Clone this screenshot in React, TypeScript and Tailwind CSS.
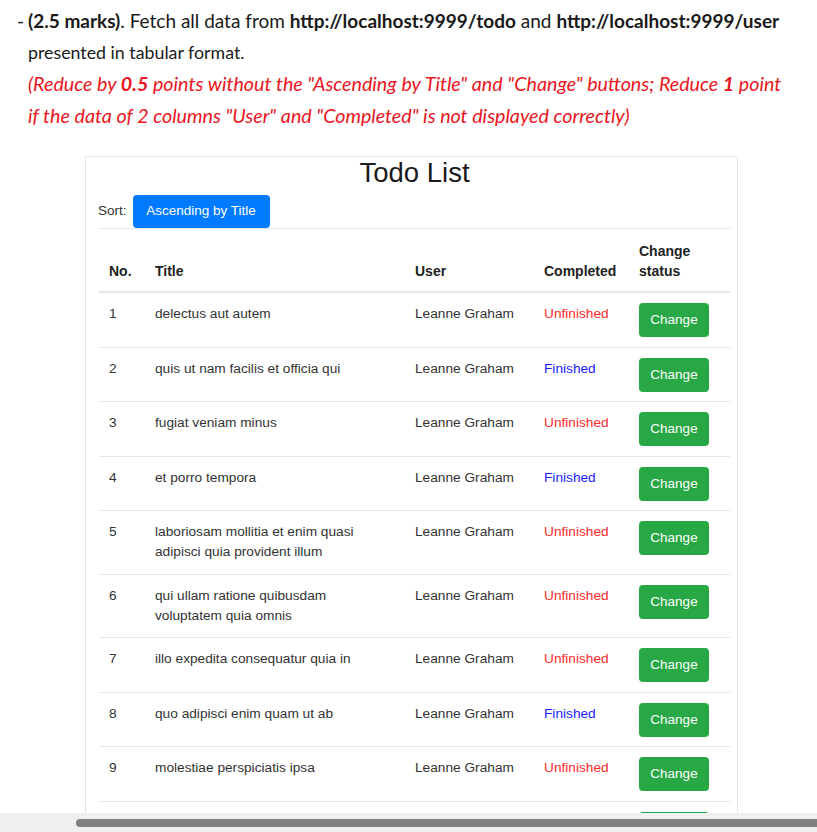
import React from 'react';

interface Todo {
  id: number;
  title: string;
  user: string;
  completed: boolean;
}

const todos: Todo[] = [
  { id: 1, title: 'delectus aut autem', user: 'Leanne Graham', completed: false },
  { id: 2, title: 'quis ut nam facilis et officia qui', user: 'Leanne Graham', completed: true },
  { id: 3, title: 'fugiat veniam minus', user: 'Leanne Graham', completed: false },
  { id: 4, title: 'et porro tempora', user: 'Leanne Graham', completed: true },
  { id: 5, title: 'laboriosam mollitia et enim quasi\nadipisci quia provident illum', user: 'Leanne Graham', completed: false },
  { id: 6, title: 'qui ullam ratione quibusdam\nvoluptatem quia omnis', user: 'Leanne Graham', completed: false },
  { id: 7, title: 'illo expedita consequatur quia in', user: 'Leanne Graham', completed: false },
  { id: 8, title: 'quo adipisci enim quam ut ab', user: 'Leanne Graham', completed: true },
  { id: 9, title: 'molestiae perspiciatis ipsa', user: 'Leanne Graham', completed: false }
];

function TodoTable() {
  return (
    <div className="ml-[85px] w-[653px] border border-[#e6e6e6] bg-white pb-4 font-['Liberation_Sans',Arial,sans-serif] text-[#333]">
      <h1 className="mt-[1px] pl-[6px] text-center text-[27.5px] leading-[30px] text-[#1a1a1a]">Todo List</h1>

      {/* sort bar */}
      <div className="mt-[7px] flex items-center pl-[12px] text-[13.5px]">
        <span className="mr-[6px] text-[#333]">Sort:</span>
        <button className="h-[33px] w-[137px] rounded-[4px] bg-[#007bff] text-[13.5px] text-white">
          Ascending by Title
        </button>
      </div>

      <table className="ml-[13px] w-[631px] table-fixed border-collapse text-left text-[13.7px] leading-[20px]">
        <colgroup>
          <col className="w-[46px]" />
          <col className="w-[260px]" />
          <col className="w-[129px]" />
          <col className="w-[95px]" />
          <col className="w-[101px]" />
        </colgroup>
        <thead>
          <tr className="border-t border-b-2 border-t-[#e3e6ea] border-b-[#e3e6ea] text-[14px] text-[#222]">
            <th className="px-[10px] pt-[12px] pb-[10px] align-bottom font-bold">No.</th>
            <th className="px-[10px] pt-[12px] pb-[10px] align-bottom font-bold">Title</th>
            <th className="px-[10px] pt-[12px] pb-[10px] align-bottom font-bold">User</th>
            <th className="px-[10px] pt-[12px] pb-[10px] align-bottom font-bold">Completed</th>
            <th className="px-[10px] pt-[12px] pb-[10px] align-bottom font-bold">
              Change
              <br />
              status
            </th>
          </tr>
        </thead>
        <tbody>
          {todos.map((todo) => (
            <tr key={todo.id} className="border-t border-[#e3e6ea]">
              <td className="px-[10px] pt-[11px] pb-[11.5px] align-top">{todo.id}</td>
              <td className="px-[10px] pt-[11px] pb-[11.5px] align-top whitespace-pre-line">{todo.title}</td>
              <td className="px-[10px] pt-[11px] pb-[11.5px] align-top">{todo.user}</td>
              <td
                className={`px-[10px] pt-[11px] pb-[11.5px] align-top ${
                  todo.completed ? 'text-[#1a1aff]' : 'text-[#ff2a2a]'
                }`}
              >
                {todo.completed ? 'Finished' : 'Unfinished'}
              </td>
              <td className="px-[10px] pt-[10px] pb-[9.5px] align-top">
                <button className="h-[34px] w-[70px] rounded-[4px] bg-[#28a745] text-[13.5px] text-white">
                  Change
                </button>
              </td>
            </tr>
          ))}
          {/* next row, cut off by the scroll area */}
          <tr className="border-t border-[#e3e6ea]">
            <td colSpan={4} className="h-[55px]" />
            <td className="px-[10px] py-[10px] align-top">
              <div className="h-[34px] w-[70px] rounded-[4px] bg-[#28a745]" />
            </td>
          </tr>
        </tbody>
      </table>
    </div>
  );
}

export default function App() {
  return (
    <div className="flex h-[832px] w-[817px] flex-col overflow-hidden bg-white">
      <div className="flex-1 overflow-hidden">
        {/* assignment text */}
        <div className="pt-[5px] font-['Lato','Liberation_Sans',sans-serif] text-[18px] leading-[31.5px] text-[#1a1a1a]">
          <p className="flex w-[800px] pl-[17px] text-[19px]">
            <span className="w-[11px]">-</span>
            <span>
              <b>(2.5 marks)</b>. Fetch all data from <b>http://localhost:9999/todo</b> and{' '}
              <b>http://localhost:9999/user</b>
            </span>
          </p>
          <p className="pl-[28px] text-[17.8px]">presented in tabular format.</p>
          <p className="pl-[28px] text-[19.7px] italic text-[#ea1622]">
            (Reduce by <b>0.5</b> points without the "Ascending by Title" and "Change" buttons; Reduce <b>1</b> point
          </p>
          <p className="pl-[28px] text-[19.7px] italic text-[#ea1622]">
            if the data of 2 columns "User" and "Completed" is not displayed correctly)
          </p>
        </div>

        <div className="mt-[25px]">
          <TodoTable />
        </div>
      </div>

      {/* horizontal scrollbar */}
      <div className="flex h-[19px] items-center bg-[#efefef]">
        <div className="ml-[76px] h-[8px] flex-1 rounded-l-full bg-[#808080]" />
      </div>
    </div>
  );
}
